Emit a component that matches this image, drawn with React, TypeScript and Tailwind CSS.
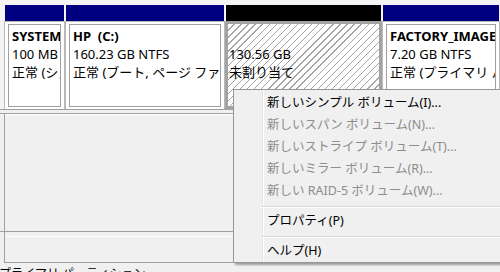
import { FunctionComponent } from "react";

// === Types ===-===-===-===-===-===-===-===-===-===-===-===-===-===-===-===
type TPartitionProps = {
	widthClass: string;
	headerClass: string;
	lines: string[];
	bold?: boolean;
	selected?: boolean;
};

type TMenuItem = { label: string; disabled?: boolean } | "sep";

// === Data ===-===-===-===-===-===-===-===-===-===-===-===-===-===-===-===
const menuItems: TMenuItem[] = [
	{ label: "新しいシンプル ボリューム(I)..." },
	{ label: "新しいスパン ボリューム(N)...", disabled: true },
	{ label: "新しいストライプ ボリューム(T)...", disabled: true },
	{ label: "新しいミラー ボリューム(R)...", disabled: true },
	{ label: "新しい RAID-5 ボリューム(W)...", disabled: true },
	"sep",
	{ label: "プロパティ(P)" },
	"sep",
	{ label: "ヘルプ(H)" },
];

// === Parts ===-===-===-===-===-===-===-===-===-===-===-===-===-===-===-===
const Partition: FunctionComponent<TPartitionProps> = ({
	widthClass,
	headerClass,
	lines,
	bold = true,
	selected = false,
}) => {
	const [first, ...rest] = lines;
	return (
		<div className={`flex flex-col ${widthClass}`}>
			<div className={`h-[16px] mx-[1px] ${headerClass}`} />
			{selected ? (
				// unallocated + selected: thick grey frame, hatched fill, empty name line
				<div className="h-[88px] border-[3px] border-[#a3a3a3] bg-[repeating-linear-gradient(135deg,#ffffff_0px,#ffffff_4px,#a4a4a4_4px,#a4a4a4_5px)] pl-[1px] pt-[3px] overflow-hidden whitespace-nowrap text-[13px] leading-[18px]">
					<div className="h-[18px]" />
					{lines.map((l) => (
						<div key={l}>{l}</div>
					))}
				</div>
			) : (
				<div className="h-[88px] flex flex-col border-x border-t border-[#b9b9b9] bg-white px-[3px] pt-[2px] pb-[2px]">
					<div className="flex-1 border border-[#a0a0a0] bg-white px-[3px] pt-[2px] overflow-hidden whitespace-nowrap text-[13px] leading-[18px]">
						<div className={`${bold ? "font-bold" : ""} whitespace-pre`}>{first}</div>
						{rest.map((l) => (
							<div key={l}>{l}</div>
						))}
					</div>
				</div>
			)}
		</div>
	);
};

const ContextMenu = () => (
	<div className="absolute left-[233px] top-[89px] w-[290px] h-[174px] flex border border-[#979797] bg-[#f0f0f0] shadow-[2px_2px_2px_rgba(0,0,0,0.35)]">
		<div className="w-[29px] border-r border-[#e2e3e3]" />
		<div className="w-px bg-white" />
		<div className="flex-1 pt-[2px] text-[12.5px] whitespace-nowrap">
			{menuItems.map((item, i) =>
				item === "sep" ? (
					<div key={i} className="h-[8px] pt-[4px] -ml-[2px]">
						<div className="h-px bg-[#d7d7d7]" />
						<div className="h-px bg-white" />
					</div>
				) : (
					<div
						key={i}
						className={`h-[22px] leading-[22px] pl-[3px] ${item.disabled ? "text-[#8d8d8d]" : "text-black"}`}
					>
						{item.label}
					</div>
				),
			)}
		</div>
	</div>
);

// === Main ===-===-===-===-===-===-===-===-===-===-===-===-===-===-===-===
const App = () => {
	return (
		<div className="relative w-[500px] h-[272px] overflow-hidden bg-[#f0f0f0] text-black font-['Noto_Sans','Noto_Sans_CJK_JP',sans-serif]">
			{/* disk row */}
			<div className="flex bg-[#f4f4f4] pt-[5px] pl-[4px] border-b border-[#a0a0a0]">
				<Partition
					widthClass="w-[61px] shrink-0"
					headerClass="bg-[#000080]"
					lines={["SYSTEM", "100 MB", "正常 (システム, アクティブ, プライマリ パーティション)"]}
				/>
				<Partition
					widthClass="w-[160px] shrink-0"
					headerClass="bg-[#000080]"
					lines={["HP  (C:)", "160.23 GB NTFS", "正常 (ブート, ページ ファイル, クラッシュ ダンプ, プライマリ パーティション)"]}
				/>
				<Partition
					widthClass="w-[157px] shrink-0"
					headerClass="bg-black"
					lines={["130.56 GB", "未割り当て"]}
					selected
				/>
				<Partition
					widthClass="flex-1 min-w-0"
					headerClass="bg-[#000080]"
					lines={["FACTORY_IMAGE", "7.20 GB NTFS", "正常 (プライマリ パーティション)"]}
				/>
			</div>

			{/* lower disk frame */}
			<div className="h-[3px]" />
			<div className="h-px bg-[#a0a0a0]" />
			<div className="ml-[4px] h-[117px] border-l border-[#a0a0a0]">
				<div className="h-px bg-white" />
			</div>
			<div className="h-px bg-[#a0a0a0]" />
			<div className="ml-[4px] h-[30px] pt-[4px] border-l border-[#a0a0a0]">
				<div className="h-px bg-white" />
			</div>
			<div className="ml-[4px] h-px bg-[#a0a0a0]" />
			<div className="-ml-[1px] pt-[3px] text-[12px] leading-[16px] whitespace-nowrap">
				プライマリ パーティション
			</div>

			<ContextMenu />
		</div>
	);
};

export default App;
